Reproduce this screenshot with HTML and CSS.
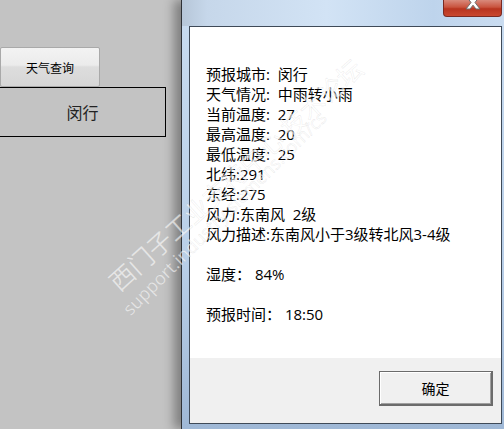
FILE: index.html
```html
<!DOCTYPE html>
<html lang="zh-CN">
<head>
  <meta charset="UTF-8" />
  <title>天气查询</title>
  <link rel="stylesheet" href="styles.css">
</head>
<body>
<div class="desk">
  <div class="form">
    <button class="query-btn">天气查询</button>
    <div class="city-box">闵行</div>
  </div>

  <div class="dialog">
    <div class="titlebar">
      <div class="close">
        <svg width="24" height="14" viewBox="0 0 24 14">
          <path d="M5 -4 L10 2.5 L5 9 L9 9 L12 5.2 L15 9 L19 9 L14 2.5 L19 -4 Z" fill="#fff" stroke="#6d6d6d" stroke-width="1"/>
        </svg>
      </div>
    </div>
    <div class="client">
      <div class="msg">
        <div>预报城市:&nbsp; 闵行</div>
        <div>天气情况:&nbsp; 中雨转小雨</div>
        <div>当前温度:&nbsp; 27</div>
        <div>最高温度:&nbsp; 20</div>
        <div>最低温度:&nbsp; 25</div>
        <div>北纬:291</div>
        <div>东经:275</div>
        <div>风力:东南风&nbsp; 2级</div>
        <div>风力描述:东南风小于3级转北风3-4级</div>
        <div class="gap"></div>
        <div>湿度： 84%</div>
        <div class="gap"></div>
        <div>预报时间： 18:50</div>
      </div>
      <div class="footer">
        <button class="ok-btn">确定</button>
      </div>
    </div>
  </div>
</div>

<!-- 水印 -->
<div class="mark mark-cn">西门子工业支持中心 技术论坛</div>
<div class="mark mark-en">support.industry.siemens.com/cs</div>
</body>
</html>
```

FILE: styles.css
```css
body {
  margin: 0;
  width: 504px;
  height: 429px;
  overflow: hidden;
  background: #c3c3c3;
  font-family: "Open Sans", "Noto Sans CJK SC", sans-serif;
  position: relative;
}

.desk {
  display: flex;
  height: 429px;
}

/* 左侧表单 */
.form {
  width: 181px;
  flex-shrink: 0;
  padding-top: 47px;
  box-sizing: border-box;
}

.query-btn {
  display: block;
  width: 100px;
  height: 40px;
  margin: 0;
  padding: 0;
  border: 1px solid #a9a9a9;
  border-radius: 2px;
  background: linear-gradient(#f3f3f3 0%, #ebebeb 45%, #dddddd 50%, #d6d6d6 100%);
  font-family: "Noto Sans CJK SC", sans-serif;
  font-size: 12px;
  color: #000;
}

.city-box {
  width: 167px;
  height: 50px;
  margin-left: -1px;
  border: 1px solid #000;
  box-sizing: border-box;
  display: flex;
  align-items: center;
  justify-content: center;
  font-family: "Noto Sans CJK SC", sans-serif;
  font-size: 16px;
  color: #222;
}

/* 消息框 */
.dialog {
  width: 323px;
  flex-shrink: 0;
  height: 429px;
  box-sizing: border-box;
  border-left: 1px solid #2e3136;
  padding: 0 2px 5px 7px;
  background: linear-gradient(180deg, #c9dcf0 0%, #b9cfe8 60%, #9fb8d6 100%);
  box-shadow: -7px 0 10px rgba(0,0,0,0.35);
  display: flex;
  flex-direction: column;
}

.titlebar {
  height: 26px;
  margin: 0 -2px 0 -7px;
  padding-right: 2px;
  background: linear-gradient(90deg, #b6c6d8 0px, #c6d7ea 25px, #d2e3f5 45%, #bed4ec 78%, #cadcf0 100%);
  display: flex;
  justify-content: flex-end;
  align-items: flex-start;
}

.close {
  width: 59px;
  height: 17px;
  box-sizing: border-box;
  border: 1px solid #7a2a22;
  border-top: none;
  border-radius: 0 0 4px 4px;
  background: linear-gradient(#d98a7c 0%, #c9533e 45%, #b8341f 55%, #c9482f 100%);
  display: flex;
  justify-content: center;
  align-items: flex-start;
}

.client {
  flex: 1;
  border: 1px solid #3f4a58;
  background: #fff;
  display: flex;
  flex-direction: column;
}

.msg {
  flex: 1;
  padding: 37px 10px 0 16px;
  font-size: 15px;
  line-height: 20px;
  color: #000;
}

.msg .gap {
  height: 20px;
}

.footer {
  height: 65px;
  background: #f0f0f0;
  display: flex;
  justify-content: flex-end;
  align-items: flex-start;
  padding: 13px 8px 0 0;
  box-sizing: border-box;
}

.ok-btn {
  width: 114px;
  height: 35px;
  margin: 0;
  padding: 0;
  background: #f0f0f0;
  border: 1px solid #6b6b6b;
  border-right-width: 2px;
  border-bottom-width: 2px;
  box-shadow: inset 1px 1px 0 #fff, inset -1px -1px 0 #a0a0a0;
  font-family: "Noto Sans CJK SC", sans-serif;
  font-size: 14px;
  color: #000;
}

/* 水印 */
.mark {
  position: absolute;
  white-space: nowrap;
  color: rgba(255,255,255,0.6);
  -webkit-text-stroke: 0.4px rgba(150,150,150,0.25);
  transform-origin: left bottom;
  pointer-events: none;
}

.mark-cn {
  left: 124px;
  top: 262px;
  font-family: "Noto Sans CJK SC", sans-serif;
  font-size: 25px;
  transform: rotate(-42deg);
}

.mark-en {
  left: 134px;
  top: 296px;
  font-family: "Open Sans", sans-serif;
  font-size: 18px;
  transform: rotate(-45deg);
}
```
